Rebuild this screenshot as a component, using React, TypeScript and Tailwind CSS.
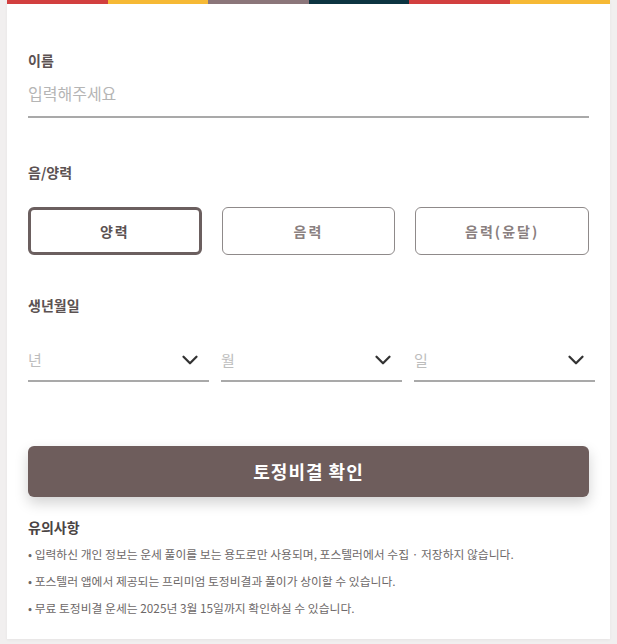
import { ChevronDown } from "lucide-react";

const stripes = ["bg-[#d23f3f]", "bg-[#f6b935]", "bg-[#8b767a]", "bg-[#0c3441]", "bg-[#d23f3f]", "bg-[#f6b935]"];

function DateSelect({ label, className }: { label: string; className: string }) {
  return (
    <div className={`flex h-[42px] items-center justify-between border-b-2 border-[#a9a9a9] pr-[6px] ${className}`}>
      <span className="text-[15px] text-[#bdbdbd]">{label}</span>
      <ChevronDown size={26} strokeWidth={2.1} className="text-[#333]" />
    </div>
  );
}

export default function App() {
  return (
    <div
      className="min-h-[644px] bg-[#f1efef] px-[7px]"
      style={{ fontFamily: '"Noto Sans CJK KR", "Noto Sans", sans-serif' }}
    >
      <div className="bg-white pb-[21px] shadow-[0_1px_3px_rgba(0,0,0,0.05)]">
        <div className="flex h-[4px]">
          {stripes.map((c, i) => (
            <div key={i} className={`flex-1 ${c}`} />
          ))}
        </div>

        <div className="px-[21px] pt-[46px]">
          <label className="block text-[14px] font-bold leading-[20px] text-[#5c5252]">이름</label>
          <input
            placeholder="입력해주세요"
            className="mt-[10px] h-[38px] w-full border-b-2 border-[#a9a9a9] pb-[10px] text-[16px] text-[#333] placeholder:text-[#b5b5b5] focus:outline-none"
          />

          <div className="mt-[44px] text-[14px] font-bold leading-[20px] text-[#5c5252]">음/양력</div>
          <div className="mt-[25px] grid grid-cols-3 gap-[20px]">
            <button className="h-[48px] rounded-[6px] border-[3px] border-[#6b5f5f] text-[14px] font-bold tracking-[2px] text-[#5c5252]">
              양력
            </button>
            <button className="h-[48px] rounded-[6px] border border-[#8f8a8a] text-[14px] font-bold tracking-[2px] text-[#8a8080]">
              음력
            </button>
            <button className="h-[48px] rounded-[6px] border border-[#8f8a8a] text-[14px] font-bold tracking-[2px] text-[#8a8080]">
              음력(윤달)
            </button>
          </div>

          <div className="mt-[40px] text-[14px] font-bold leading-[20px] text-[#5c5252]">생년월일</div>
          <div className="mt-[25px] flex gap-[12px] -mr-[7px]">
            <DateSelect label="년" className="w-[181px]" />
            <DateSelect label="월" className="w-[181px]" />
            <DateSelect label="일" className="w-[181px]" />
          </div>

          <button className="mt-[64px] h-[51px] w-full rounded-[6px] bg-[#6e5d5c] text-[18px] font-bold tracking-[1px] text-white shadow-[0_6px_14px_rgba(0,0,0,0.18)]">
            토정비결 확인
          </button>

          <div className="mt-[20px] text-[14px] font-bold leading-[20px] text-[#4a4444]">유의사항</div>
          <ul className="mt-[7px] space-y-[7px] text-[11.8px] leading-[20px] text-[#6d6868]">
            <li>• 입력하신 개인 정보는 운세 풀이를 보는 용도로만 사용되며, 포스텔러에서 수집 · 저장하지 않습니다.</li>
            <li>• 포스텔러 앱에서 제공되는 프리미엄 토정비결과 풀이가 상이할 수 있습니다.</li>
            <li>• 무료 토정비결 운세는 2025년 3월 15일까지 확인하실 수 있습니다.</li>
          </ul>
        </div>
      </div>
    </div>
  );
}
